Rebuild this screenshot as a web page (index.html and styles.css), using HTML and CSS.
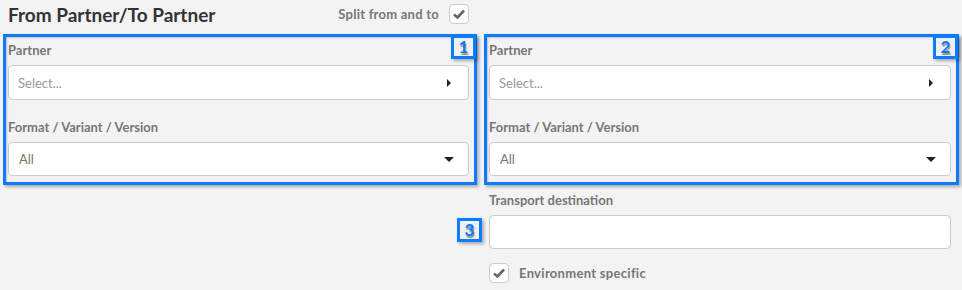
FILE: index.html
```html
<!DOCTYPE html>
<html>
<head>
	<meta http-equiv="Content-Type" content="text/html;charset=UTF-8">
	<title>From Partner/To Partner</title>
	<link rel="stylesheet" href="styles.css">
</head>
<body>
	<div class="head">
		<h1 class="title">From Partner/To Partner</h1>
		<label class="split">Split from and to <span class="check"><svg width="12" height="10" viewBox="0 0 12 10"><path d="M1 5.5 L4.5 8.5 L11 1.5" fill="none" stroke="#666" stroke-width="2.6"/></svg></span></label>
	</div>
	<div class="grid">
		<!-- 1 -->
		<div class="group">
			<span class="badge">1</span>
			<div class="label">Partner</div>
			<div class="select"><span class="ph">Select...</span><span class="tri-right"></span></div>
			<div class="label second">Format / Variant / Version</div>
			<div class="select low"><span class="val">All</span><span class="tri-down"></span></div>
		</div>
		<!-- 2 -->
		<div class="group">
			<span class="badge">2</span>
			<div class="label">Partner</div>
			<div class="select"><span class="ph">Select...</span><span class="tri-right"></span></div>
			<div class="label second">Format / Variant / Version</div>
			<div class="select low"><span class="val">All</span><span class="tri-down"></span></div>
		</div>
		<!-- 3 -->
		<div class="transport">
			<div class="label">Transport destination</div>
			<div class="field">
				<span class="badge small">3</span>
				<div class="input"></div>
			</div>
			<label class="env"><span class="check"><svg width="12" height="10" viewBox="0 0 12 10"><path d="M1 5.5 L4.5 8.5 L11 1.5" fill="none" stroke="#666" stroke-width="2.6"/></svg></span> Environment specific</label>
		</div>
	</div>
</body>
</html>
```
FILE: styles.css
```css
*{ margin: 0; padding: 0; box-sizing: border-box; }
body{ background: #f3f3f3; font-family: Lato, "Open Sans", sans-serif; color: #777; padding: 0 11px 0 8px; width: 962px; height: 290px; overflow: hidden; }

.head{ width: 461px; height: 34px; display: flex; align-items: flex-start; justify-content: space-between; padding-top: 4px; }
.title{ font-size: 19px; font-weight: 700; color: #333; line-height: 22px; }
.split{ display: flex; align-items: center; gap: 10px; font-size: 13px; font-weight: 700; color: #777; letter-spacing: .25px; }

.check{ display: inline-flex; width: 20px; height: 20px; align-items: center; justify-content: center; background: #fff; border: 1px solid #ccc; border-radius: 4px; }

.grid{ display: grid; grid-template-columns: 461px 462px; column-gap: 20px; }

.label{ font-size: 13px; font-weight: 700; line-height: 16px; margin: 8px 0 7px; color: #777; }
.label.second{ margin-top: 19px; }

.select{ height: 35px; background: #fff; border: 1px solid #ccc; border-radius: 4px; display: flex; align-items: center; justify-content: space-between; padding: 0 16px 0 9px; font-size: 13px; }
.select.low{ height: 34px; padding-left: 10px; }
.ph{ color: #999; }
.val{ color: #777; }
.tri-right{ width: 0; height: 0; border-top: 4px solid transparent; border-bottom: 4px solid transparent; border-left: 4px solid #222; margin-right: 1px; }
.tri-down{ width: 0; height: 0; border-left: 5px solid transparent; border-right: 5px solid transparent; border-top: 5px solid #222; margin-right: -2px; }

/* annotation frames */
.group{ position: relative; }
.group::after{ content: ""; position: absolute; top: 0; left: -5px; right: -8px; bottom: -9px; border: 3px solid #0b7bff; box-shadow: 2px 2px 3px rgba(0,0,0,.3), inset 1px 1px 2px rgba(0,0,0,.2); pointer-events: none; }
.badge{ position: absolute; top: 1px; right: -7px; width: 25px; height: 24px; border: 3px solid #0b7bff; background: #f0f0f0; color: #0b7bff; font-weight: 700; font-size: 17px; line-height: 18px; text-align: center; text-shadow: 1px 2px 1px rgba(0,0,0,.4); box-shadow: 2px 2px 3px rgba(0,0,0,.3); z-index: 1; }

.transport{ grid-column: 2; padding-top: 8px; }
.transport .label{ margin: 8px 0 7px; }
.field{ position: relative; }
.input{ height: 34px; background: #fff; border: 1px solid #ccc; border-radius: 4px; }
.badge.small{ top: 3px; right: auto; left: -32px; }
.env{ display: flex; align-items: center; gap: 10px; margin-top: 14px; font-size: 13px; font-weight: 700; letter-spacing: .3px; }
```
